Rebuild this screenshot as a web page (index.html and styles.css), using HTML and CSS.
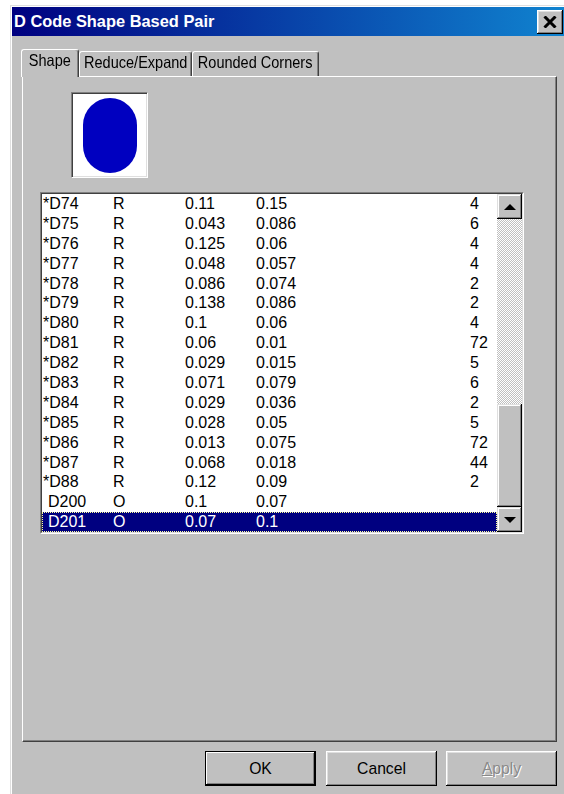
FILE: index.html
```html
<!DOCTYPE html>
<html lang="en">
<head>
<meta charset="utf-8">
<title>D Code Shape Based Pair</title>
<link rel="stylesheet" href="styles.css">
</head>
<body>
<div class="dialog">
  <div class="titlebar">
    <span class="title">D Code Shape Based Pair</span>
    <div class="close" aria-label="Close">
      <svg width="14" height="12" viewBox="0 0 14 12">
        <path d="M1.5 0.5 L12.5 11.5 M12.5 0.5 L1.5 11.5" stroke="#000" stroke-width="3" fill="none"/>
      </svg>
    </div>
  </div>

  <div class="tabs">
    <div class="tab tab-active"><span class="tab-label">Shape</span></div>
    <div class="tab tab-reduce"><span class="tab-label">Reduce/Expand</span></div>
    <div class="tab tab-rounded"><span class="tab-label">Rounded Corners</span></div>
  </div>

  <div class="panel">
    <div class="preview">
      <div class="pad-shape"></div>
    </div>

    <div class="listbox">
      <div class="listbox-inner">
        <div class="rows">
          <div class="row"><span>*D74</span><span>R</span><span>0.11</span><span>0.15</span><span>4</span></div>
          <div class="row"><span>*D75</span><span>R</span><span>0.043</span><span>0.086</span><span>6</span></div>
          <div class="row"><span>*D76</span><span>R</span><span>0.125</span><span>0.06</span><span>4</span></div>
          <div class="row"><span>*D77</span><span>R</span><span>0.048</span><span>0.057</span><span>4</span></div>
          <div class="row"><span>*D78</span><span>R</span><span>0.086</span><span>0.074</span><span>2</span></div>
          <div class="row"><span>*D79</span><span>R</span><span>0.138</span><span>0.086</span><span>2</span></div>
          <div class="row"><span>*D80</span><span>R</span><span>0.1</span><span>0.06</span><span>4</span></div>
          <div class="row"><span>*D81</span><span>R</span><span>0.06</span><span>0.01</span><span>72</span></div>
          <div class="row"><span>*D82</span><span>R</span><span>0.029</span><span>0.015</span><span>5</span></div>
          <div class="row"><span>*D83</span><span>R</span><span>0.071</span><span>0.079</span><span>6</span></div>
          <div class="row"><span>*D84</span><span>R</span><span>0.029</span><span>0.036</span><span>2</span></div>
          <div class="row"><span>*D85</span><span>R</span><span>0.028</span><span>0.05</span><span>5</span></div>
          <div class="row"><span>*D86</span><span>R</span><span>0.013</span><span>0.075</span><span>72</span></div>
          <div class="row"><span>*D87</span><span>R</span><span>0.068</span><span>0.018</span><span>44</span></div>
          <div class="row"><span>*D88</span><span>R</span><span>0.12</span><span>0.09</span><span>2</span></div>
          <div class="row"><span class="code-plain">D200</span><span>O</span><span>0.1</span><span>0.07</span><span></span></div>
          <div class="row row-selected"><span class="code-plain">D201</span><span>O</span><span>0.07</span><span>0.1</span><span></span></div>
        </div>
        <div class="scrollbar">
          <div class="sb-btn">
            <svg width="12" height="6" viewBox="0 0 12 6"><polygon points="6,0 12,6 0,6" fill="#000"/></svg>
          </div>
          <div class="sb-track">
            <div class="sb-thumb"></div>
          </div>
          <div class="sb-btn">
            <svg width="12" height="6" viewBox="0 0 12 6"><polygon points="0,0 12,0 6,6" fill="#000"/></svg>
          </div>
        </div>
      </div>
    </div>
  </div>

  <div class="buttons">
    <div class="btn btn-default">OK</div>
    <div class="btn btn-cancel">Cancel</div>
    <div class="btn btn-disabled"><u>A</u>pply</div>
  </div>
</div>
</body>
</html>
```

FILE: styles.css
```css
* {
  box-sizing: border-box;
}

html,
body {
  margin: 0;
  overflow: hidden;
  background: #ffffff;
}

body {
  font-family: "Liberation Sans", Arial, sans-serif;
  font-size: 16px;
  color: #000;
}

/* window frame */
.dialog {
  margin: 5px 0 0 10px;
  width: 558px;
  height: 800px;
  border-left: 1px solid #dfdfdf;
  border-top: 1px solid #dfdfdf;
  padding: 1px 0 0 1px;
  box-shadow: inset 1px 1px #ffffff;
  background: #c0c0c0;
}

/* caption */
.titlebar {
  height: 29px;
  display: flex;
  align-items: center;
  justify-content: space-between;
  padding: 0 5px 0 2px;
  background: linear-gradient(to right, #000080, #1084d0);
}

.title {
  color: #ffffff;
  font-weight: bold;
  font-size: 16.4px;
  white-space: nowrap;
}

.close {
  width: 26px;
  height: 24px;
  display: flex;
  align-items: center;
  justify-content: center;
  background: #c0c0c0;
  box-shadow: inset -1px -1px #000000, inset 1px 1px #ffffff,
    inset -2px -2px #808080, inset 2px 2px #dfdfdf;
}

/* tab strip */
.tabs {
  display: flex;
  align-items: flex-start;
  height: 27px;
  margin: 13px 0 0 9px;
}

.tab {
  height: 25px;
  margin-top: 2px;
  border: 1px solid;
  border-color: #ffffff #404040 transparent #ffffff;
  border-bottom: none;
  border-radius: 3px 3px 0 0;
  box-shadow: inset -1px 0 #808080;
  background: #c0c0c0;
  display: flex;
  justify-content: center;
  line-height: 20px;
  white-space: nowrap;
}

/* caption glyphs are tall but condensed */
.tab-label {
  display: inline-block;
  font-size: 16.5px;
  transform: scaleX(0.88);
}

.tab-active {
  position: relative;
  z-index: 1;
  width: 58px;
  height: 28px;
  margin-top: 0;
  line-height: 21px;
}

.tab-reduce {
  width: 113px;
}

.tab-rounded {
  width: 127px;
}

/* property page */
.panel {
  width: 535px;
  height: 666px;
  margin-left: 10px;
  border-top: 1px solid #ffffff;
  border-left: 1px solid #ffffff;
  border-right: 1px solid #404040;
  border-bottom: 1px solid #404040;
  box-shadow: inset -1px -1px #808080;
  display: flex;
  flex-direction: column;
  align-items: flex-start;
}

/* pad shape preview */
.preview {
  width: 77px;
  height: 86px;
  margin: 15px 0 0 48px;
  border: 1px solid;
  border-color: #808080 #ffffff #ffffff #808080;
  box-shadow: inset 1px 1px #404040, inset -1px -1px #dfdfdf;
  background: #ffffff;
  display: flex;
  align-items: center;
  justify-content: center;
}

.pad-shape {
  width: 54px;
  height: 75px;
  border-radius: 27px;
  background: #0000c0;
}

/* aperture list */
.listbox {
  width: 484px;
  height: 342px;
  margin: 14px 0 0 17px;
  border: 1px solid;
  border-color: #808080 #ffffff #ffffff #808080;
}

.listbox-inner {
  height: 100%;
  border: 1px solid;
  border-color: #404040 #dfdfdf #dfdfdf #404040;
  display: flex;
}

.rows {
  flex: 1;
  overflow: hidden;
  background: #ffffff;
}

.row {
  display: grid;
  grid-template-columns: 70px 72px 71px 214px 1fr;
  height: 19.9px;
  line-height: 19.9px;
  padding-left: 1px;
  white-space: nowrap;
}

.code-plain {
  padding-left: 5px;
}

.row-selected {
  background: #000080;
  color: #ffffff;
  outline: 1px dotted #ffff9c;
  outline-offset: -1px;
}

/* vertical scroll bar */
.scrollbar {
  width: 25px;
  display: flex;
  flex-direction: column;
}

.sb-btn {
  height: 25px;
  flex: none;
  display: flex;
  align-items: center;
  justify-content: center;
  background: #c0c0c0;
  box-shadow: inset -1px -1px #000000, inset 1px 1px #dfdfdf,
    inset -2px -2px #808080, inset 2px 2px #ffffff;
}

.sb-track {
  flex: 1;
  display: flex;
  flex-direction: column;
  justify-content: flex-end;
  background: repeating-conic-gradient(#c0c0c0 0 25%, #ffffff 0 50%) 0 0 / 2px 2px;
}

.sb-thumb {
  height: 103px;
  background: #c0c0c0;
  box-shadow: inset -1px -1px #000000, inset 1px 1px #dfdfdf,
    inset -2px -2px #808080, inset 2px 2px #ffffff;
}

/* dialog buttons */
.buttons {
  display: flex;
  margin: 9px 0 0 193px;
}

.btn {
  width: 111px;
  height: 35px;
  display: flex;
  align-items: center;
  justify-content: center;
  background: #c0c0c0;
  font-size: 15.7px;
  box-shadow: inset -1px -1px #000000, inset 1px 1px #ffffff,
    inset -2px -2px #808080, inset 2px 2px #dfdfdf;
}

.btn-default {
  border: 1px solid #000000;
  box-shadow: inset -1px -1px #000000, inset 1px 1px #ffffff,
    inset -2px -2px #808080;
}

.btn-cancel {
  margin-left: 10px;
}

.btn-disabled {
  margin-left: 9px;
  color: #8a8a8a;
  text-shadow: 1px 1px 0 #ffffff;
}

.btn-disabled u {
  text-decoration-color: #8a8a8a;
}
```
